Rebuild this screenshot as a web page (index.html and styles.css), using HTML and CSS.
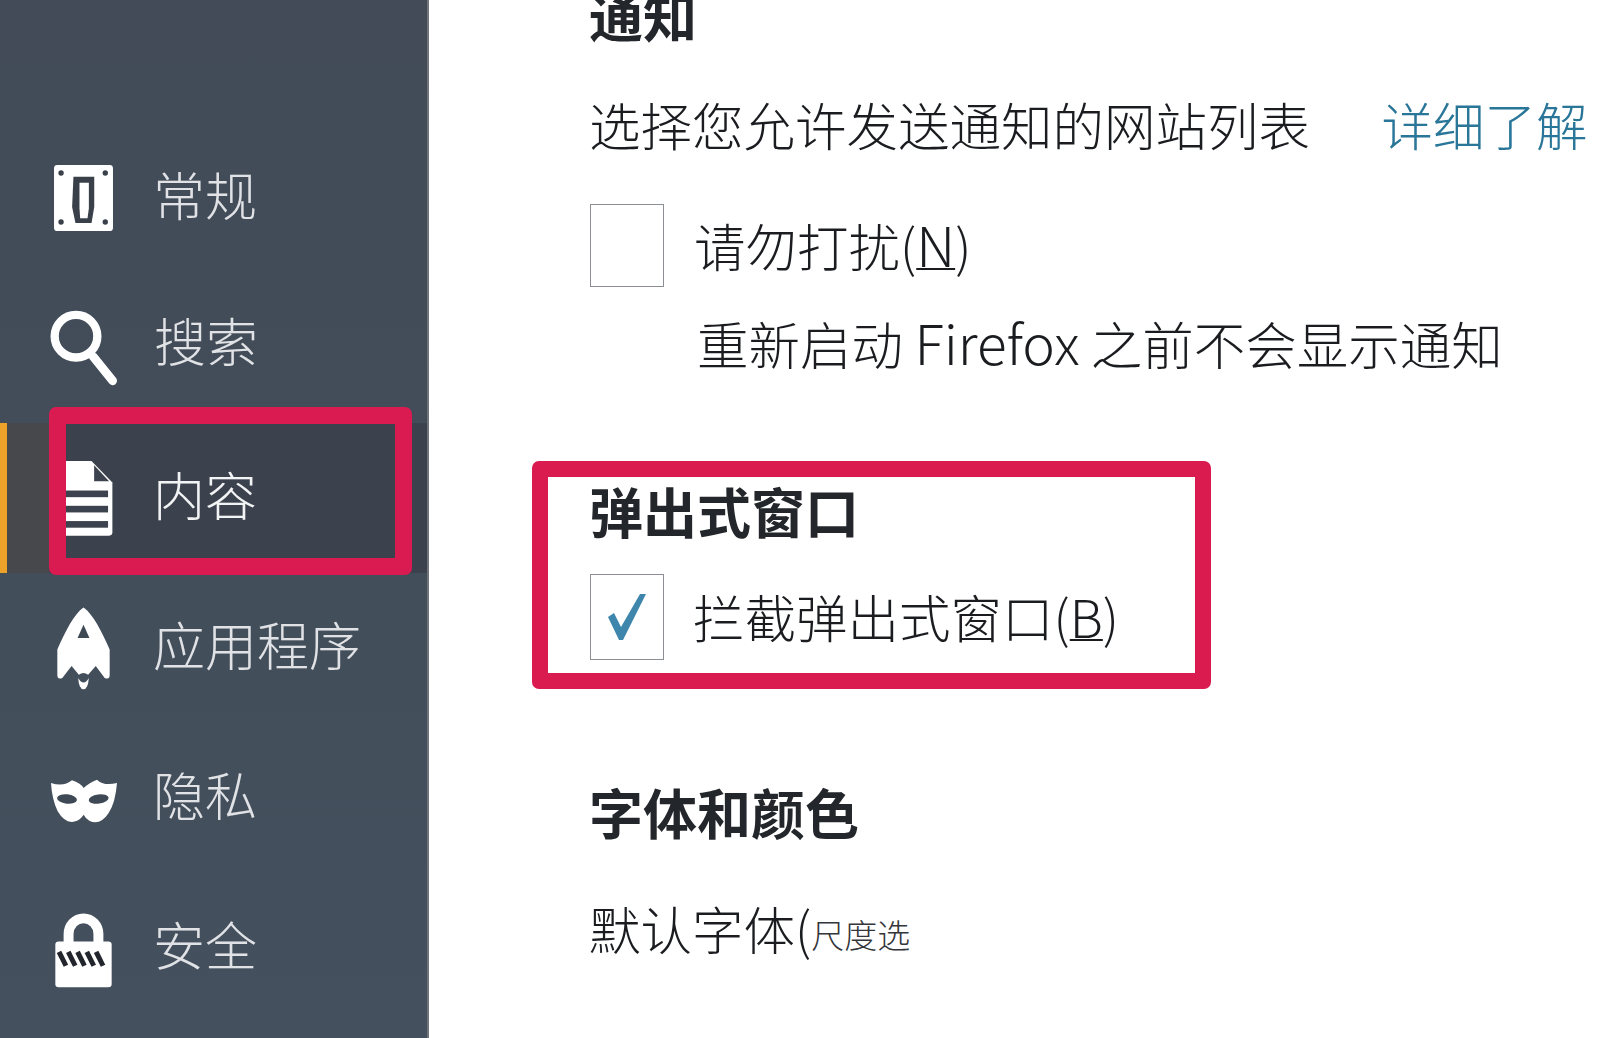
FILE: index.html
```html
<!DOCTYPE html>
<html lang="zh-CN">
<head>
<meta charset="utf-8">
<title>选项</title>
<link rel="stylesheet" href="styles.css">
</head>
<body>
<div class="page">
  <nav class="sidebar">
    <div class="nav-item">
      <span class="nav-icon">
        <svg class="ico-general" viewBox="162 103 176 197"><rect x="162" y="103" width="176" height="197" rx="10" fill="#fff"/><g fill="#39404a"><circle cx="183" cy="127" r="8"/><circle cx="315" cy="127" r="8"/><circle cx="183" cy="273" r="8"/><circle cx="315" cy="273" r="8"/><path d="M220 138H282V228L274 276H226L216 228Z"/></g><path d="M238 156H266V232L262 262H240L238 232Z" fill="#fff"/></svg>
      </span>
      <span class="nav-label">常规</span>
    </div>
    <div class="nav-item">
      <span class="nav-icon">
        <svg class="ico-search" viewBox="150 540 204 230"><circle cx="228" cy="618" r="64" fill="none" stroke="#fff" stroke-width="25"/><path d="M280 680L338 752" stroke="#fff" stroke-width="26" stroke-linecap="round"/></svg>
      </span>
      <span class="nav-label nav-label-raised">搜索</span>
    </div>
    <div class="nav-item is-active">
      <span class="nav-icon">
        <svg class="ico-doc" viewBox="160 997 176 226"><path d="M160 997H272L335 1062V1212Q335 1222 325 1222H160Z" fill="#fff"/><path d="M280 1010L325 1058H280Z" fill="#3d434e"/><g fill="#3d434e"><rect x="160" y="1086" width="162" height="20"/><rect x="160" y="1132" width="162" height="20"/><rect x="160" y="1178" width="162" height="20"/></g></svg>
      </span>
      <span class="nav-label">内容</span>
      <span class="nav-mark"></span>
    </div>
    <div class="nav-item">
      <span class="nav-icon">
        <svg class="ico-rocket" viewBox="170 113 160 248"><path d="M250 113C222 132 195 185 171 240V316Q171 332 186 326L214 290L236 316Q250 306 264 316L287 290L314 326Q329 332 329 316V240C305 185 278 132 250 113Z" fill="#fff"/><path d="M250 165L232 205H268Z" fill="#3f4955"/><path d="M234 326Q236 360 250 360Q264 360 266 326Q258 340 250 340Q242 340 234 326Z" fill="#fff"/></svg>
      </span>
      <span class="nav-label">应用程序</span>
    </div>
    <div class="nav-item">
      <span class="nav-icon">
        <svg class="ico-mask" viewBox="152 628 198 132"><path d="M152 640Q190 652 215 632Q240 640 250 655Q265 640 290 630Q310 650 350 640Q345 700 325 730Q300 768 268 754Q255 746 250 735Q240 750 225 755Q195 764 172 725Q155 690 152 640Z" fill="#fff"/><ellipse cx="200" cy="688" rx="30" ry="14" fill="#3f4955" transform="rotate(6 200 688)"/><ellipse cx="295" cy="688" rx="30" ry="14" fill="#3f4955" transform="rotate(-8 295 688)"/></svg>
      </span>
      <span class="nav-label">隐私</span>
    </div>
    <div class="nav-item">
      <span class="nav-icon">
        <svg class="ico-lock" viewBox="164 1032 172 226"><path d="M205 1125V1095A45 47 0 0 1 295 1095V1125" fill="none" stroke="#fff" stroke-width="30"/><rect x="165" y="1118" width="170" height="138" rx="10" fill="#fff"/><g stroke="#22262c" stroke-width="15"><path d="M176 1149L197 1191"/><path d="M204 1149L225 1191"/><path d="M232 1149L253 1191"/><path d="M260 1149L281 1191"/><path d="M288 1149L309 1191"/></g></svg>
      </span>
      <span class="nav-label">安全</span>
    </div>
  </nav>

  <main class="content">
    <h2 class="heading heading-top">通知</h2>
    <div class="line">
      <span>选择您允许发送通知的网站列表</span>
      <a class="link">详细了解</a>
    </div>
    <label class="check-row check-row-first">
      <span class="checkbox"></span>
      <span class="check-text">请勿打扰(<u class="latin">N</u>)</span>
    </label>
    <p class="line note">重新启动 <span class="latin">Firefox</span> 之前不会显示通知</p>

    <section class="popup-box">
      <h2 class="heading">弹出式窗口</h2>
      <label class="check-row check-row-popup">
        <span class="checkbox">
          <svg class="tick" viewBox="0 0 38 46"><path d="M0 23L6 19L13 33L32 0H38L15 46H11Z" fill="#3f86ad"/></svg>
        </span>
        <span class="check-text">拦截弹出式窗口(<u>B</u>)</span>
      </label>
    </section>

    <h2 class="heading heading-fonts">字体和颜色</h2>
    <div class="line line-font">默认字体(<span class="garbled">尺度选</span></div>
  </main>
</div>
</body>
</html>
```
FILE: styles.css
```css
* {
  box-sizing: border-box;
}

html,
body {
  margin: 0;
  height: 100%;
  background: #fff;
}

.page {
  display: flex;
  width: 1600px;
  height: 1038px;
  overflow: hidden;
  font-family: "Noto Sans CJK SC", "Noto Sans", sans-serif;
  font-weight: 300;
  color: #1a1c20;
}

.sidebar {
  flex: 0 0 429px;
  padding-top: 123px;
  background: linear-gradient(180deg, #424b57 0%, #434e5b 60%, #44505d 100%);
  border-right: 2px solid #6f747b;
}

.nav-item {
  position: relative;
  display: flex;
  align-items: center;
  gap: 36px;
  height: 150px;
  padding-left: 50px;
  color: #e0e2e5;
  font-size: 52px;
}

.nav-item.is-active {
  color: #f2f3f4;
  background: linear-gradient(90deg, #46484b 0, #46484b 49px, #3c424d 49px);
  box-shadow: inset 7px 0 0 #eda32a;
}

.nav-icon {
  display: flex;
  flex: 0 0 67px;
  align-items: center;
  justify-content: center;
}

.nav-icon svg {
  display: block;
}

.ico-general { width: 59px; height: 66px; }
.ico-search { width: 68px; height: 77px; }
.ico-doc { width: 59px; height: 75px; }
.ico-rocket { width: 53px; height: 83px; }
.ico-mask { width: 66px; height: 44px; margin-top: 5px; }
.ico-lock { width: 57px; height: 75px; margin-top: 5px; }

.nav-label {
  padding-bottom: 8px;
  line-height: 60px;
  white-space: nowrap;
}

.nav-label-raised {
  padding-bottom: 16px;
}

.nav-mark {
  position: absolute;
  top: -16px;
  left: 49px;
  width: 363px;
  height: 168px;
  border: 17px solid #d91b52;
  border-radius: 7px;
}

.content {
  flex: 1;
  padding-left: 160px;
  font-size: 51.5px;
}

.heading {
  margin: 0;
  font-size: 54px;
  font-weight: 700;
  line-height: 62px;
  color: #23262b;
}

.heading-top {
  margin-top: -16px;
}

.line {
  margin: 0;
  line-height: 60px;
  white-space: nowrap;
}

.heading-top + .line {
  margin-top: 48px;
}

.link {
  margin-left: 60px;
  color: #2a7699;
}

.latin {
  font-size: 55px;
}

.check-row {
  display: flex;
  align-items: center;
  gap: 30px;
  white-space: nowrap;
}

.check-text {
  padding-bottom: 4px;
}

.check-row u {
  text-decoration-thickness: 2px;
}

.checkbox {
  display: flex;
  flex: 0 0 74px;
  align-items: center;
  justify-content: center;
  height: 83px;
  margin-left: 1px;
  background: #fff;
  border: 1.5px solid #8b8f94;
}

.check-row-first {
  margin-top: 49px;
}

.note {
  margin-top: 24px;
  padding-left: 108px;
}

.popup-box {
  width: 679px;
  height: 228px;
  margin-top: 88px;
  margin-left: -57px;
  padding: 3px 0 0 41px;
  border: 16px solid #d91b4f;
  border-radius: 7px;
}

.check-row-popup {
  margin-top: 32px;
  gap: 29px;
}

.check-row-popup .checkbox {
  height: 86px;
}

.tick {
  width: 38px;
  height: 46px;
}

.heading-fonts {
  margin-top: 92px;
}

.line-font {
  margin-top: 55px;
}

.garbled {
  font-size: 33px;
  vertical-align: 2px;
  color: #33363a;
}
```
